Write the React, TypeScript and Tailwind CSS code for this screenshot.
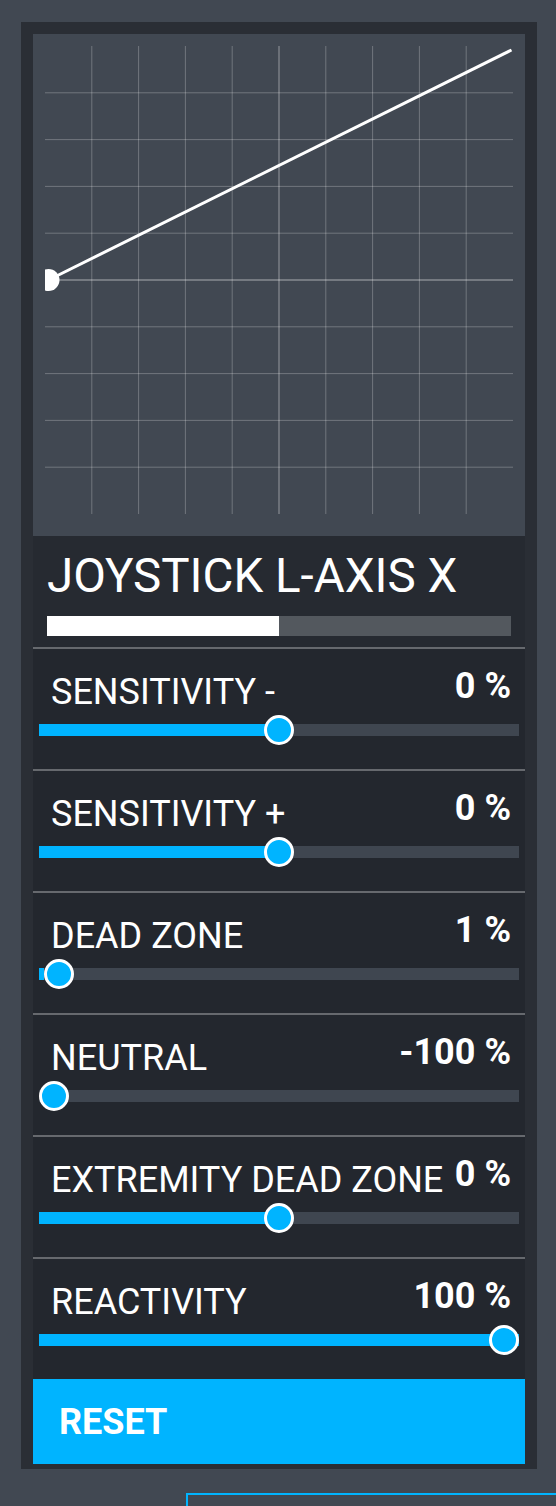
import React from 'react'

type SliderRow = {
  label: string
  value: string
  pct: number
}

const rows: SliderRow[] = [
  { label: 'SENSITIVITY -', value: '0 %', pct: 0.5 },
  { label: 'SENSITIVITY +', value: '0 %', pct: 0.5 },
  { label: 'DEAD ZONE', value: '1 %', pct: 0.01 },
  { label: 'NEUTRAL', value: '-100 %', pct: 0 },
  { label: 'EXTREMITY DEAD ZONE', value: '0 %', pct: 0.5 },
  { label: 'REACTIVITY', value: '100 %', pct: 1 },
]

const STEP = 46.8

function CurveGraph() {
  const ticks = [1, 2, 3, 4, 5, 6, 7, 8, 9]
  return (
    <div className="h-[502px] bg-[#414852] pl-[12px] pt-[12px]">
      <svg width="468" height="468" viewBox="0 0 468 468" className="block overflow-hidden">
        {ticks.map((k) => (
          <line
            key={`v${k}`}
            x1={k * STEP}
            x2={k * STEP}
            y1={0}
            y2={468}
            stroke="#ffffff"
            strokeOpacity={k === 5 ? 0.45 : 0.25}
            strokeWidth={1}
          />
        ))}
        {ticks.map((k) => (
          <line
            key={`h${k}`}
            x1={0}
            x2={468}
            y1={k * STEP}
            y2={k * STEP}
            stroke="#ffffff"
            strokeOpacity={k === 5 ? 0.55 : 0.25}
            strokeWidth={1}
          />
        ))}
        <line x1={3.5} y1={234} x2={466.5} y2={4} stroke="#ffffff" strokeWidth={3} />
        <circle cx={3.5} cy={234} r={11} fill="#ffffff" />
      </svg>
    </div>
  )
}

function Slider({ row }: { row: SliderRow }) {
  return (
    <div className="h-[122px] border-t-2 border-[#66696e] bg-[#23272e]">
      <div className="flex items-start justify-between pl-[18px] pr-[14px] pt-[19px]">
        <span className="mt-[6px] text-[36px] leading-[36px] text-white">{row.label}</span>
        <span className="text-[36px] font-bold leading-[36px] text-white">{row.value}</span>
      </div>
      <div className="relative mx-[6px] mt-[14px] h-[12px] bg-[#3f4650]">
        <div className="h-full bg-[#00b4ff]" style={{ width: `${row.pct * 100}%` }} />
        <div
          className="absolute top-1/2 h-[30px] w-[30px] -translate-y-1/2 rounded-full border-[3px] border-white bg-[#00b4ff]"
          style={{ left: `${row.pct * 450}px` }}
        />
      </div>
    </div>
  )
}

export default function App() {
  return (
    <div className="h-[1506px] w-full overflow-hidden bg-[#414852] pl-[21px] pt-[22px] font-['Roboto',sans-serif]">
      <div className="w-[516px] bg-[#2a2e35] px-[12px] pb-[5px] pt-[12px]">
        <CurveGraph />

        <div className="h-[111px] bg-[#262a31] px-[14px] pt-[16px]">
          <h1 className="text-[47.5px] font-normal leading-[48px] text-white">JOYSTICK L-AXIS X</h1>
          <div className="mt-[16px] flex h-[20px] bg-[#53585e]">
            <div className="h-full w-1/2 bg-white" />
          </div>
        </div>

        {rows.map((row) => (
          <Slider key={row.label} row={row} />
        ))}

        <button className="flex h-[85px] w-full items-center bg-[#00b4ff] pl-[26px] text-[36px] font-bold text-white">
          RESET
        </button>
      </div>

      <div className="ml-[165px] mt-[24px] h-[60px] w-[400px] border-2 border-[#00b4ff]" />
    </div>
  )
}
